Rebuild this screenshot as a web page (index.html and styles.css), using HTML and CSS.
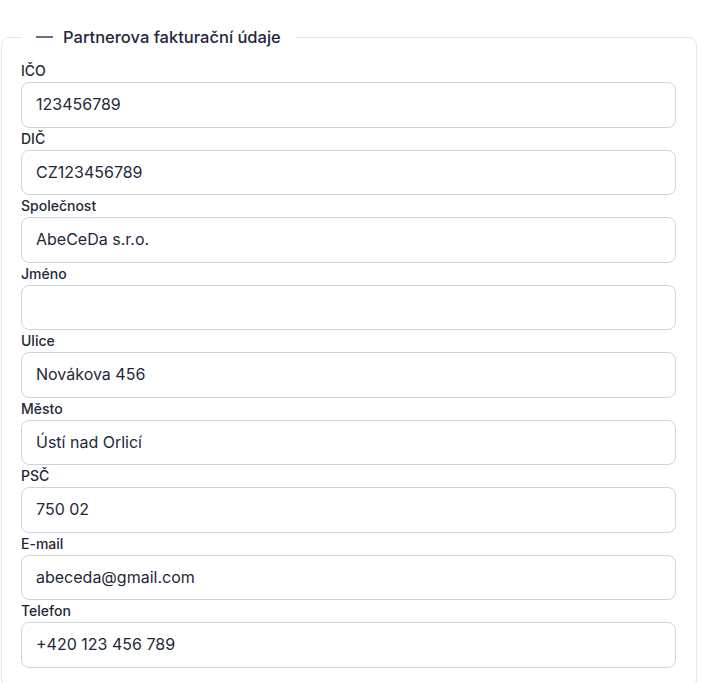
FILE: index.html
```html
<!DOCTYPE html>
<html lang="cs">
<head>
<meta charset="utf-8">
<link rel="stylesheet" href="styles.css">
</head>
<body>
<div class="page">
  <fieldset class="panel">
    <legend class="panel-legend"><span class="dash"></span>Partnerova fakturační údaje</legend>
    <div class="field"><label class="label">IČO</label><div class="input">123456789</div></div>
    <div class="field"><label class="label">DIČ</label><div class="input">CZ123456789</div></div>
    <div class="field"><label class="label">Společnost</label><div class="input">AbeCeDa s.r.o.</div></div>
    <div class="field"><label class="label">Jméno</label><div class="input"></div></div>
    <div class="field"><label class="label">Ulice</label><div class="input">Novákova 456</div></div>
    <div class="field"><label class="label">Město</label><div class="input">Ústí nad Orlicí</div></div>
    <div class="field"><label class="label">PSČ</label><div class="input">750 02</div></div>
    <div class="field"><label class="label">E-mail</label><div class="input">abeceda@gmail.com</div></div>
    <div class="field"><label class="label">Telefon</label><div class="input">+420 123 456 789</div></div>
  </fieldset>
</div>
</body>
</html>
```
FILE: styles.css
```css
html, body {
  margin: 0;
  padding: 0;
  background: #ffffff;
}
body {
  font-family: Inter, "Noto Sans", "Liberation Sans", sans-serif;
  color: #1e293b;
}
.page {
  padding: 25px 5px 0 1px;
}
.panel {
  margin: 0;
  border: 1px solid #e2e8f0;
  border-radius: 8px;
  padding: 11px 20px 20px 19px;
  min-width: 0;
}
.panel-legend {
  padding: 0 14px 0 14px;
  margin-left: 1px;
  font-size: 16.5px;
  line-height: 24px;
  font-weight: 550;
  color: #1e293b;
  display: flex;
  align-items: center;
}
.dash {
  display: inline-block;
  width: 17px;
  height: 2px;
  background: #64748b;
  margin-right: 10px;
}
.field {
  display: flex;
  flex-direction: column;
}
.label {
  font-size: 14px;
  line-height: 20px;
  font-weight: 450;
  color: #1f2937;
  padding-top: 1px;
  margin-bottom: 1px;
}
.input {
  box-sizing: border-box;
  height: 45.5px;
  border: 1px solid #cbd5e1;
  border-radius: 8px;
  padding: 0 14px;
  font-size: 16px;
  line-height: 43px;
  color: #1e293b;
  background: #fff;
}
```
